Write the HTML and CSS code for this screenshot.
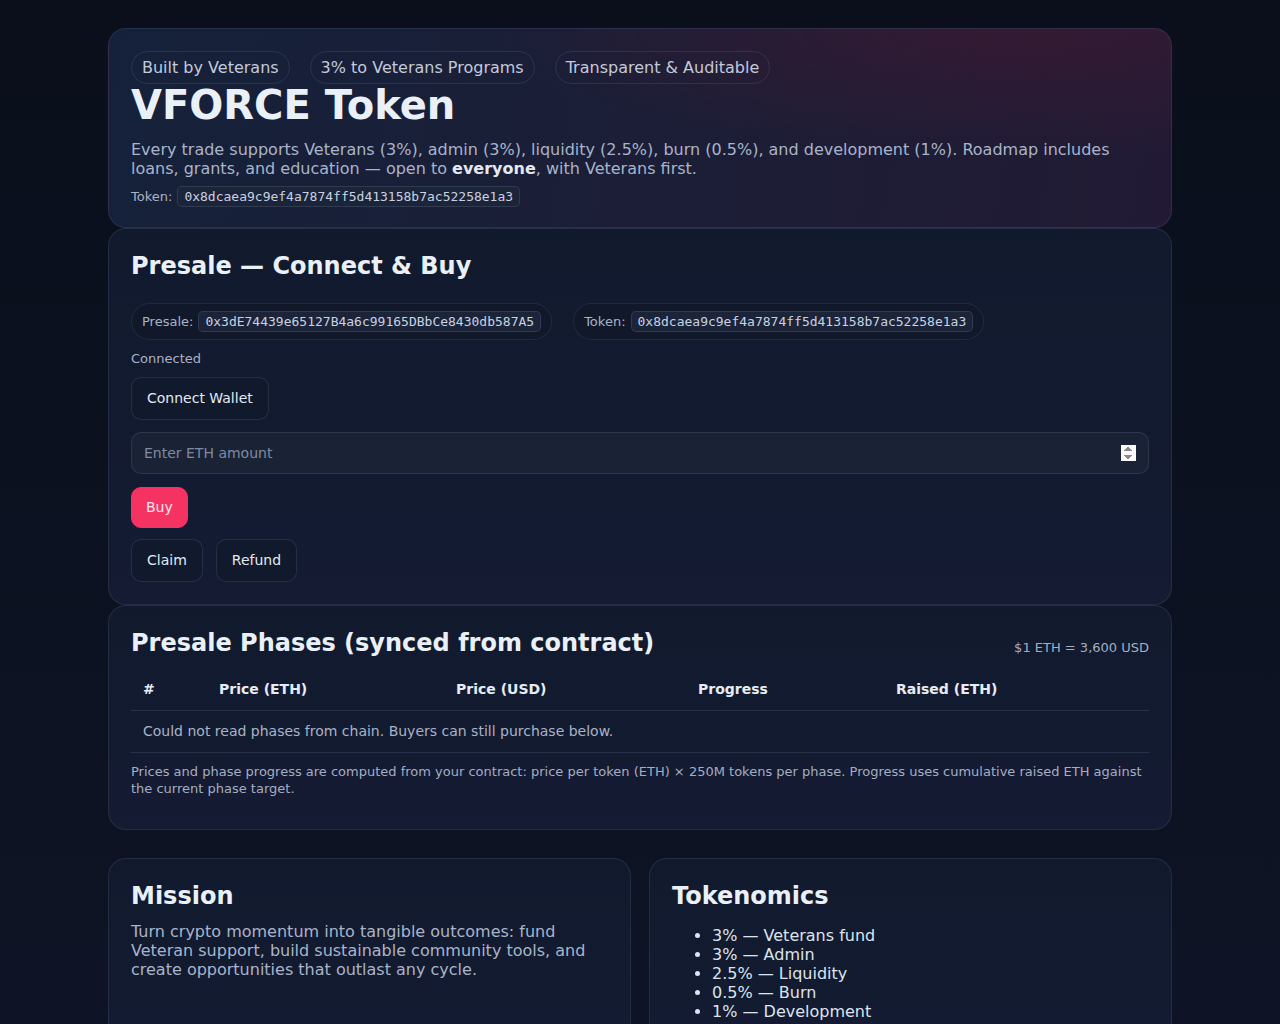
FILE: index.html
```html
<!DOCTYPE html>
<html lang="en">
<head>
<meta charset="utf-8">
<title>VFORCE Token</title>
<link rel="stylesheet" href="styles.css">
</head>
<body>
<main class="wrap">
  <section class="card hero">
    <div class="pills">
      <span class="pill">Built by Veterans</span>
      <span class="pill">3% to Veterans Programs</span>
      <span class="pill">Transparent &amp; Auditable</span>
    </div>
    <h1 class="title">VFORCE Token</h1>
    <p class="lead">Every trade supports Veterans (3%), admin (3%), liquidity (2.5%), burn (0.5%), and development (1%). Roadmap includes loans, grants, and education — open to <b>everyone</b>, with Veterans first.</p>
    <div class="addr-line"><span class="muted">Token:</span> <code class="code">0x8dcaea9c9ef4a7874ff5d413158b7ac52258e1a3</code></div>
  </section>

  <section class="card presale">
    <h2 class="h2">Presale — Connect &amp; Buy</h2>
    <div class="addr-pills">
      <div class="addr-pill"><span class="muted">Presale:</span><code class="code">0x3dE74439e65127B4a6c99165DBbCe8430db587A5</code></div>
      <div class="addr-pill"><span class="muted">Token:</span><code class="code">0x8dcaea9c9ef4a7874ff5d413158b7ac52258e1a3</code></div>
    </div>
    <div class="status">Connected</div>
    <div class="row"><button class="btn">Connect Wallet</button></div>
    <input class="amount" type="number" placeholder="Enter ETH amount">
    <div class="row"><button class="btn btn-buy">Buy</button></div>
    <div class="row gap">
      <button class="btn">Claim</button>
      <button class="btn">Refund</button>
    </div>
  </section>

  <section class="card phases">
    <div class="phases-head">
      <h2 class="h2">Presale Phases (synced from contract)</h2>
      <span class="rate">$1 ETH = 3,600 USD</span>
    </div>
    <table class="table">
      <colgroup>
        <col class="c1"><col class="c2"><col class="c3"><col class="c4"><col class="c5">
      </colgroup>
      <thead>
        <tr><th>#</th><th>Price (ETH)</th><th>Price (USD)</th><th>Progress</th><th>Raised (ETH)</th></tr>
      </thead>
      <tbody>
        <tr><td colspan="5" class="empty">Could not read phases from chain. Buyers can still purchase below.</td></tr>
      </tbody>
    </table>
    <p class="note">Prices and phase progress are computed from your contract: price per token (ETH) × 250M tokens per phase. Progress uses cumulative raised ETH against the current phase target.</p>
  </section>

  <div class="grid">
    <section class="card info">
      <h2 class="h2">Mission</h2>
      <p class="body-text">Turn crypto momentum into tangible outcomes: fund Veteran support, build sustainable community tools, and create opportunities that outlast any cycle.</p>
    </section>
    <section class="card info">
      <h2 class="h2">Tokenomics</h2>
      <ul class="list">
        <li>3% — Veterans fund</li>
        <li>3% — Admin</li>
        <li>2.5% — Liquidity</li>
        <li>0.5% — Burn</li>
        <li>1% — Development</li>
      </ul>
    </section>
  </div>
</main>
</body>
</html>
```

FILE: styles.css
```css
* { box-sizing: border-box; }
html, body { margin: 0; padding: 0; }
body {
  font-family: "DejaVu Sans", "Liberation Sans", sans-serif;
  color: #e6ecf5;
  background: linear-gradient(180deg, #0a0f1b 0%, #0c1221 60%, #0e1425 100%);
  min-height: 1024px;
}
.wrap {
  max-width: 1064px;
  margin: 0 auto;
  padding-top: 28px;
}
.card {
  border: 1px solid rgba(148, 163, 200, 0.14);
  border-radius: 18px;
  padding: 22px;
  background: linear-gradient(180deg, #111a2d 0%, #141b33 100%);
}
.hero {
  padding-bottom: 20px;
  background:
    radial-gradient(ellipse 70% 90% at 85% 0%, rgba(70, 25, 50, 0.55), rgba(70, 25, 50, 0) 70%),
    linear-gradient(100deg, #15213a 0%, #1b1e36 50%, #221a34 100%);
}
.pills { display: flex; gap: 20px; }
.pill {
  font-size: 16px;
  line-height: 19px;
  padding: 6px 10px;
  border: 1px solid rgba(160, 170, 210, 0.14);
  border-radius: 999px;
  color: #c3cadc;
}
.title {
  margin: 0;
  font-size: 40px;
  line-height: 42px;
  font-weight: 700;
  color: #eaf0f8;
}
.lead {
  margin: 14px 0 0;
  font-size: 16px;
  line-height: 19px;
  color: #a9b4ca;
}
.lead b { color: #e3e9f3; }
.addr-line {
  margin-top: 8px;
  font-size: 13px;
  line-height: 21px;
  display: flex;
  align-items: center;
  gap: 5px;
}
.muted { color: #a9b3c6; font-size: 13px; }
.code {
  font-family: "DejaVu Sans Mono", "Liberation Mono", monospace;
  font-size: 13px;
  line-height: 15px;
  padding: 2px 6px;
  border: 1px solid rgba(160, 175, 210, 0.16);
  border-radius: 5px;
  background: #1b2438;
  color: #c9d2e2;
}
.h2 {
  margin: 0;
  font-size: 24px;
  line-height: 31px;
  font-weight: 700;
  color: #eaf0f8;
}
.presale .h2 { margin-bottom: 21px; }
.addr-pills { display: flex; gap: 21px; }
.addr-pill {
  display: flex;
  align-items: center;
  gap: 5px;
  padding: 7px 10px;
  border: 1px solid rgba(160, 175, 210, 0.12);
  border-radius: 999px;
  background: rgba(15, 22, 38, 0.5);
}
.status {
  margin-top: 11px;
  font-size: 13px;
  line-height: 16px;
  color: #a9b3c6;
}
.row { display: flex; }
.row.gap { gap: 13px; margin-top: 11px; }
.status + .row { margin-top: 10px; }
.btn {
  font-family: inherit;
  font-size: 14px;
  line-height: 17px;
  padding: 12px 15px;
  border: 1px solid rgba(160, 175, 210, 0.14);
  border-radius: 10px;
  background: #111a2d;
  color: #e3e9f3;
}
.btn-buy {
  background: #f43362;
  border-color: #f43362;
  padding: 11px 14px;
  color: #fde7ee;
}
.amount {
  display: block;
  width: 100%;
  margin: 12px 0 13px;
  height: 42px;
  padding: 0 12px;
  font-family: inherit;
  font-size: 14px;
  color: #e3e9f3;
  background: #1a2236;
  border: 1px solid rgba(160, 175, 210, 0.14);
  border-radius: 10px;
  outline: none;
}
.amount::placeholder { color: #7f8aa0; }
.amount::-webkit-inner-spin-button { opacity: 1; }
.phases-head {
  display: flex;
  justify-content: space-between;
  align-items: flex-end;
}
.rate {
  font-size: 13px;
  line-height: 15px;
  margin-bottom: 4px;
  color: #a4aec2;
}
.table {
  width: 100%;
  margin-top: 10px;
  border-collapse: collapse;
  table-layout: fixed;
  font-size: 14px;
  line-height: 17px;
}
.c1 { width: 76px; }
.c2 { width: 237px; }
.c3 { width: 242px; }
.c4 { width: 198px; }
.c5 { width: auto; }
.table th {
  text-align: left;
  font-weight: 700;
  color: #e6ecf5;
  padding: 12px;
  border-bottom: 1px solid rgba(160, 175, 210, 0.14);
}
.table td {
  padding: 12px;
  border-bottom: 1px solid rgba(160, 175, 210, 0.14);
}
.empty { color: #a9b3c6; }
.note {
  margin: 10px 0;
  font-size: 13px;
  line-height: 17px;
  color: #a4aec2;
}
.grid {
  margin-top: 28px;
  display: grid;
  grid-template-columns: 1fr 1fr;
  gap: 18px;
}
.info { min-height: 200px; }
.body-text {
  margin: 10px 0 0;
  font-size: 16px;
  line-height: 19px;
  color: #a9b4ca;
}
.list {
  margin: 14px 0 0;
  padding-left: 40px;
  font-size: 16px;
  line-height: 19px;
  color: #dde4ef;
}
```
